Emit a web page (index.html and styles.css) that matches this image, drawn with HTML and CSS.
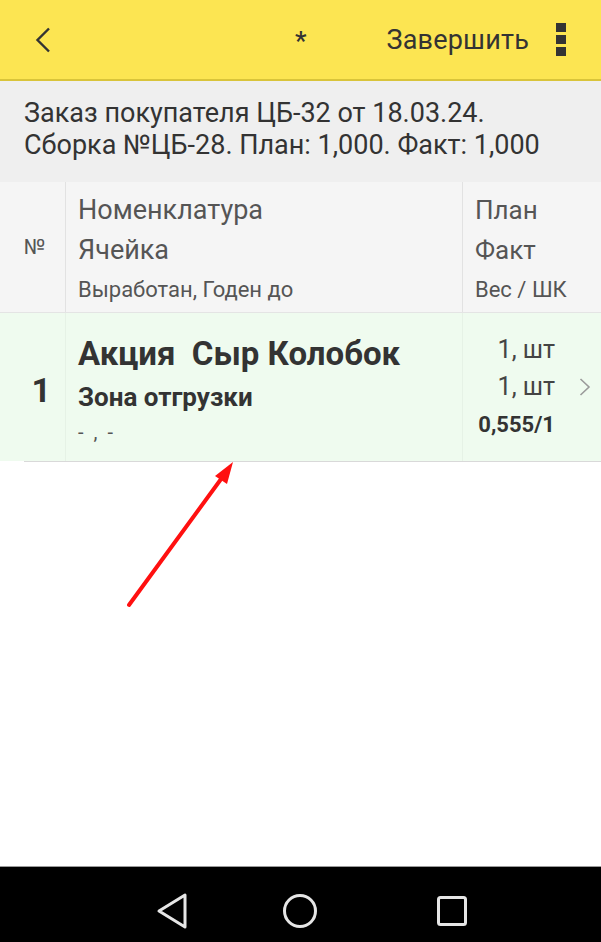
FILE: index.html
```html
<!DOCTYPE html>
<html lang="ru">
<head>
    <meta charset="UTF-8">
    <meta name="viewport" content="width=device-width, initial-scale=1.0">
    <title>Сборка</title>
    <link rel="stylesheet" href="styles.css">
</head>
<body>
    <div class="screen">
        <header class="top-bar">
            <span class="back">
                <svg width="16" height="26" viewBox="0 0 16 26"><path d="M14 1.5 L2.5 13 L14 24.5" fill="none" stroke="#333" stroke-width="2.4"/></svg>
            </span>
            <span class="modified">*</span>
            <span class="finish">Завершить</span>
            <span class="kebab"><i></i><i></i><i></i></span>
        </header>

        <div class="doc-info">
            <p>Заказ покупателя ЦБ-32 от 18.03.24.</p>
            <p>Сборка №ЦБ-28. План: 1,000. Факт: 1,000</p>
        </div>

        <div class="table-head">
            <div class="col-num">№</div>
            <div class="col-name">
                <div class="line">Номенклатура</div>
                <div class="line">Ячейка</div>
                <div class="line small">Выработан, Годен до</div>
            </div>
            <div class="col-qty">
                <div class="line">План</div>
                <div class="line">Факт</div>
                <div class="line small">Вес / ШК</div>
            </div>
        </div>

        <div class="table-row">
            <div class="col-num">1</div>
            <div class="col-name">
                <div class="item-title">Акция&nbsp; Сыр Колобок</div>
                <div class="item-cell">Зона отгрузки</div>
                <div class="item-dates">- , -</div>
            </div>
            <div class="col-qty">
                <div class="qty">1, шт</div>
                <div class="qty">1, шт</div>
                <div class="weight">0,555/1</div>
            </div>
            <span class="row-arrow">
                <svg width="12" height="18" viewBox="0 0 12 18"><path d="M1.5 1 L10 9 L1.5 17" fill="none" stroke="#9a9a9a" stroke-width="1.6"/></svg>
            </span>
        </div>
        <div class="row-divider"></div>

        <div class="empty"></div>

        <nav class="nav-bar">
            <svg class="nav-back" width="32" height="38" viewBox="0 0 32 38"><path d="M29 3 L29 35 L3 19 Z" fill="none" stroke="#e6e6e6" stroke-width="3" stroke-linejoin="round"/></svg>
            <svg class="nav-home" width="36" height="36" viewBox="0 0 36 36"><circle cx="18" cy="18" r="15.5" fill="none" stroke="#e6e6e6" stroke-width="3"/></svg>
            <svg class="nav-recent" width="32" height="32" viewBox="0 0 32 32"><rect x="2.5" y="2.5" width="27" height="27" rx="2" fill="none" stroke="#e6e6e6" stroke-width="3"/></svg>
        </nav>

        <svg class="pointer" width="601" height="942" viewBox="0 0 601 942">
            <line x1="129" y1="605" x2="224" y2="475" stroke="#ff1010" stroke-width="4" stroke-linecap="round"/>
            <path d="M233 462 L215 476 L227 484 Z" fill="#ff1010"/>
        </svg>
    </div>
</body>
</html>
```

FILE: styles.css
```css
body {
    margin: 0;
    font-family: Roboto, 'Noto Sans', sans-serif;
    background-color: #ffffff;
    color: #333;
}
.screen {
    position: relative;
    width: 601px;
    height: 942px;
    display: flex;
    flex-direction: column;
    overflow: hidden;
}
.top-bar {
    height: 79px;
    flex-shrink: 0;
    background-color: #fce552;
    border-bottom: 2px solid #d9c43a;
    display: flex;
    align-items: center;
    padding: 0 35px 0 35px;
}
.back {
    display: flex;
    margin-top: 1px;
}
.modified {
    margin-left: auto;
    font-size: 26px;
    font-weight: 500;
    color: #333;
    margin-top: 2px;
}
.finish {
    margin-left: 80px;
    font-size: 27px;
    letter-spacing: 0.2px;
    color: #333;
}
.kebab {
    margin-left: 27px;
    display: flex;
    flex-direction: column;
    gap: 3px;
}
.kebab i {
    display: block;
    width: 10px;
    height: 9px;
    background-color: #333;
}
.doc-info {
    background-color: #efefef;
    padding: 16px 24px 21px;
    flex-shrink: 0;
}
.doc-info p {
    margin: 0;
    font-size: 27px;
    line-height: 32px;
    color: #333;
}
.table-head {
    display: flex;
    background-color: #f5f5f5;
    border-bottom: 1px solid #e4e4e4;
    flex-shrink: 0;
}
.col-num {
    width: 66px;
    box-sizing: border-box;
    border-right: 1px solid #e2e2e2;
    display: flex;
    align-items: center;
    justify-content: flex-end;
    padding-right: 20px;
    font-size: 21px;
    color: #555;
}
.col-name {
    width: 397px;
    box-sizing: border-box;
    border-right: 1px solid #e2e2e2;
    padding: 0 12px;
}
.col-qty {
    flex: 1;
    padding: 0 0 0 12px;
}
.table-head .col-name,
.table-head .col-qty {
    padding-top: 8px;
    padding-bottom: 2px;
}
.line {
    font-size: 26px;
    line-height: 40px;
    color: #555;
}
.table-head .col-name .line {
    font-size: 27px;
}
.line.small,
.table-head .col-name .line.small {
    font-size: 22px;
}
.table-row {
    display: flex;
    height: 148px;
    background-color: #effbef;
    position: relative;
    flex-shrink: 0;
}
.table-row .col-num {
    border-right-color: #e6f2e6;
    font-size: 34px;
    font-weight: 700;
    color: #333;
    padding-right: 14px;
    padding-top: 6px;
}
.table-row .col-name {
    border-right-color: #e6f2e6;
    padding-top: 20px;
}
.item-title {
    font-size: 33px;
    font-weight: 700;
    line-height: 42px;
    color: #333;
}
.item-cell {
    font-size: 26px;
    font-weight: 700;
    line-height: 44px;
    color: #333;
}
.item-dates {
    font-size: 20px;
    line-height: 26px;
    word-spacing: 5px;
    color: #555;
}
.table-row .col-qty {
    padding: 18px 46px 0 0;
    text-align: right;
}
.qty {
    font-size: 25px;
    line-height: 37px;
    color: #444;
}
.weight {
    font-size: 22px;
    font-weight: 700;
    line-height: 40px;
    color: #333;
}
.row-arrow {
    position: absolute;
    right: 10px;
    top: 65px;
    display: flex;
}
.row-divider {
    height: 1px;
    margin-left: 24px;
    background-color: #d9d9d9;
    flex-shrink: 0;
}
.empty {
    flex: 1;
}
.nav-bar {
    height: 76px;
    flex-shrink: 0;
    background-color: #000;
    border-top: 1px solid #9a9a9a;
    display: flex;
    align-items: center;
    padding: 13px 0 0 156px;
    box-sizing: border-box;
}
.nav-home {
    margin-left: 94px;
}
.nav-recent {
    margin-left: 118px;
}
.pointer {
    position: absolute;
    left: 0;
    top: 0;
    pointer-events: none;
}
```
